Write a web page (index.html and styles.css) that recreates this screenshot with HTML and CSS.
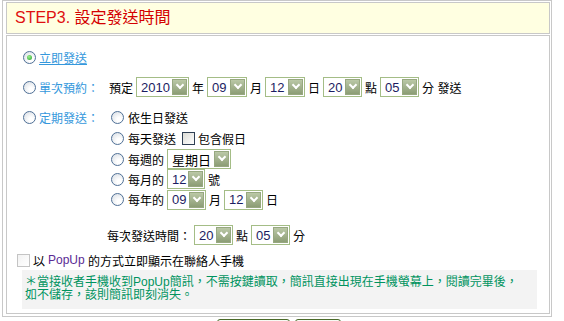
FILE: index.html
```html
<!DOCTYPE html>
<html lang="zh-Hant">
<head>
    <meta charset="UTF-8">
    <title>設定發送時間</title>
    <link rel="stylesheet" href="styles.css">
</head>
<body>
    <div class="panel">
        <div class="step-head"><span class="step-no">STEP3.</span> 設定發送時間</div>
        <div class="step-body">
            <div class="row row-now">
                <span class="radio on"></span><a class="opt-link" href="#">立即發送</a>
            </div>
            <div class="row row-once">
                <span class="radio"></span><span class="opt-label">單次預約：</span>
                <span>預定</span>
                <span class="sel sel-year"><span class="val">2010</span><span class="drop"></span></span>
                <span>年</span>
                <span class="sel sel-40"><span class="val">09</span><span class="drop"></span></span>
                <span>月</span>
                <span class="sel sel-40"><span class="val">12</span><span class="drop"></span></span>
                <span>日</span>
                <span class="sel"><span class="val">20</span><span class="drop"></span></span>
                <span>點</span>
                <span class="sel"><span class="val">05</span><span class="drop"></span></span>
                <span>分 發送</span>
            </div>
            <div class="row-cycle">
                <div class="cycle-head">
                    <span class="radio"></span><span class="opt-label">定期發送：</span>
                </div>
                <div class="cycle-list">
                    <div class="sub sub-tall"><span class="radio"></span>依生日發送</div>
                    <div class="sub sub-tall"><span class="radio"></span>每天發送<span class="check"></span>包含假日</div>
                    <div class="sub"><span class="radio"></span>每週的
                        <span class="sel sel-week"><span class="val">星期日</span><span class="drop"></span></span>
                    </div>
                    <div class="sub"><span class="radio"></span>每月的
                        <span class="sel sel-day"><span class="val">12</span><span class="drop"></span></span>號
                    </div>
                    <div class="sub sub-tall"><span class="radio"></span>每年的
                        <span class="sel"><span class="val">09</span><span class="drop"></span></span>
                        <span>月</span>
                        <span class="sel"><span class="val">12</span><span class="drop"></span></span>
                        <span>日</span>
                    </div>
                </div>
            </div>
            <div class="row row-time">
                <span>每次發送時間：</span>
                <span class="sel"><span class="val">20</span><span class="drop"></span></span>
                <span>點</span>
                <span class="sel"><span class="val">05</span><span class="drop"></span></span>
                <span>分</span>
            </div>
            <div class="row row-popup">
                <span class="check light"></span>以 <span class="popup-word">PopUp</span>&nbsp;的方式立即顯示在聯絡人手機
            </div>
            <div class="note">
                ＊當接收者手機收到PopUp簡訊，不需按鍵讀取，簡訊直接出現在手機螢幕上，閱讀完畢後，<br>如不儲存，該則簡訊即刻消失。
            </div>
        </div>
    </div>
    <div class="buttons">
        <button class="btn btn-prev">上一步</button>
        <button class="btn">完成</button>
    </div>
</body>
</html>
```

FILE: styles.css
```css
body {
    margin: 0;
    font-family: "Liberation Sans", "Noto Sans CJK TC", sans-serif;
    font-size: 12px;
    color: #000;
    background: #fff;
}

.panel {
    margin-left: 2px;
    width: 550px;
    box-sizing: border-box;
    border: 1px solid #c8c8c8;
    padding: 1px 1px 2px 3px;
}

.step-head {
    height: 30px;
    line-height: 30px;
    border: 1px solid #c8c8c8;
    background-color: #ffffe1;
    padding-left: 8px;
    margin-bottom: 1px;
    font-size: 16px;
    color: #d40000;
}
.step-no {
    color: #e01010;
}

.step-body {
    border: 1px solid #c8c8c8;
    padding: 11px 12px 4px 10px;
}

.row {
    display: flex;
    align-items: center;
    height: 20px;
    white-space: nowrap;
}
.row-now,
.row-once {
    padding-left: 6px;
    margin-bottom: 10px;
}

.opt-link {
    color: #3598dc;
    text-decoration: underline;
}
.opt-label {
    display: inline-block;
    width: 70px;
    color: #3598dc;
}

/* radio buttons drawn by hand */
.radio {
    position: relative;
    flex: none;
    width: 13px;
    height: 13px;
    box-sizing: border-box;
    border: 1px solid #4f7096;
    border-radius: 50%;
    background: radial-gradient(circle at 65% 70%, #ffffff 20%, #d5dbe2 100%);
    margin-right: 3px;
}
.radio.on::after {
    content: "";
    position: absolute;
    left: 3px;
    top: 3px;
    width: 5px;
    height: 5px;
    border-radius: 50%;
    background: radial-gradient(circle at 40% 35%, #9ef08e, #21a12a);
}

.check {
    flex: none;
    width: 13px;
    height: 13px;
    box-sizing: border-box;
    border: 1px solid #2f3f54;
    background: linear-gradient(135deg, #dcdcd6, #ffffff);
    margin: 0 3px 0 6px;
}
.check.light {
    border-color: #c4c4c4;
    background: linear-gradient(135deg, #f2f2f2, #ffffff);
    margin: 0 3px 0 0;
}

/* fake select boxes */
.sel {
    display: inline-flex;
    align-items: center;
    justify-content: space-between;
    flex: none;
    width: 39px;
    height: 20px;
    box-sizing: border-box;
    border: 1px solid #a4bd86;
    background: #fff;
    padding: 0 1px 0 4px;
    margin: 0 3px;
    font-size: 13px;
    color: #1c1c62;
}
.sel-year { width: 53px; }
.sel-40 { width: 40px; }
.sel-week { width: 64px; color: #000; }
.sel-day { width: 38px; }

.drop {
    position: relative;
    flex: none;
    width: 15px;
    height: 16px;
    box-sizing: border-box;
    border: 1px solid #97a880;
    background: linear-gradient(#bac8a6, #8c9d75);
}
.drop::after {
    content: "";
    position: absolute;
    left: 4px;
    top: 2px;
    width: 4px;
    height: 4px;
    border-right: 2px solid #fff;
    border-bottom: 2px solid #fff;
    transform: rotate(45deg);
}

.row-cycle {
    display: flex;
    align-items: flex-start;
    padding-left: 6px;
}
.cycle-head {
    display: flex;
    align-items: center;
    height: 21px;
}
.cycle-list {
    padding-left: 2px;
}
.sub {
    display: flex;
    align-items: center;
    height: 20px;
    white-space: nowrap;
}
.sub-tall {
    height: 21px;
}
.sub .radio {
    margin-right: 4px;
}

.row-time {
    margin-top: 15px;
    padding-left: 90px;
}
.row-popup {
    margin-top: 5px;
}
.popup-word {
    color: #5b2a94;
    margin-left: 3px;
}

.note {
    margin-left: 5px;
    background-color: #f3f3f3;
    padding: 6px 4px 7px 3px;
    line-height: 13px;
    color: #00935f;
    white-space: nowrap;
}

.buttons {
    display: flex;
    justify-content: center;
    gap: 5px;
    width: 554px;
    margin-top: 2px;
    padding-left: 2px;
}
.btn {
    height: 24px;
    width: 46px;
    border: 1px solid #4b6a2a;
    border-radius: 3px;
    background: linear-gradient(#f8faf4, #dfe6d3);
    font-family: "Liberation Sans", "Noto Sans CJK TC", sans-serif;
    font-size: 12px;
}
.btn-prev {
    width: 73px;
}
```
